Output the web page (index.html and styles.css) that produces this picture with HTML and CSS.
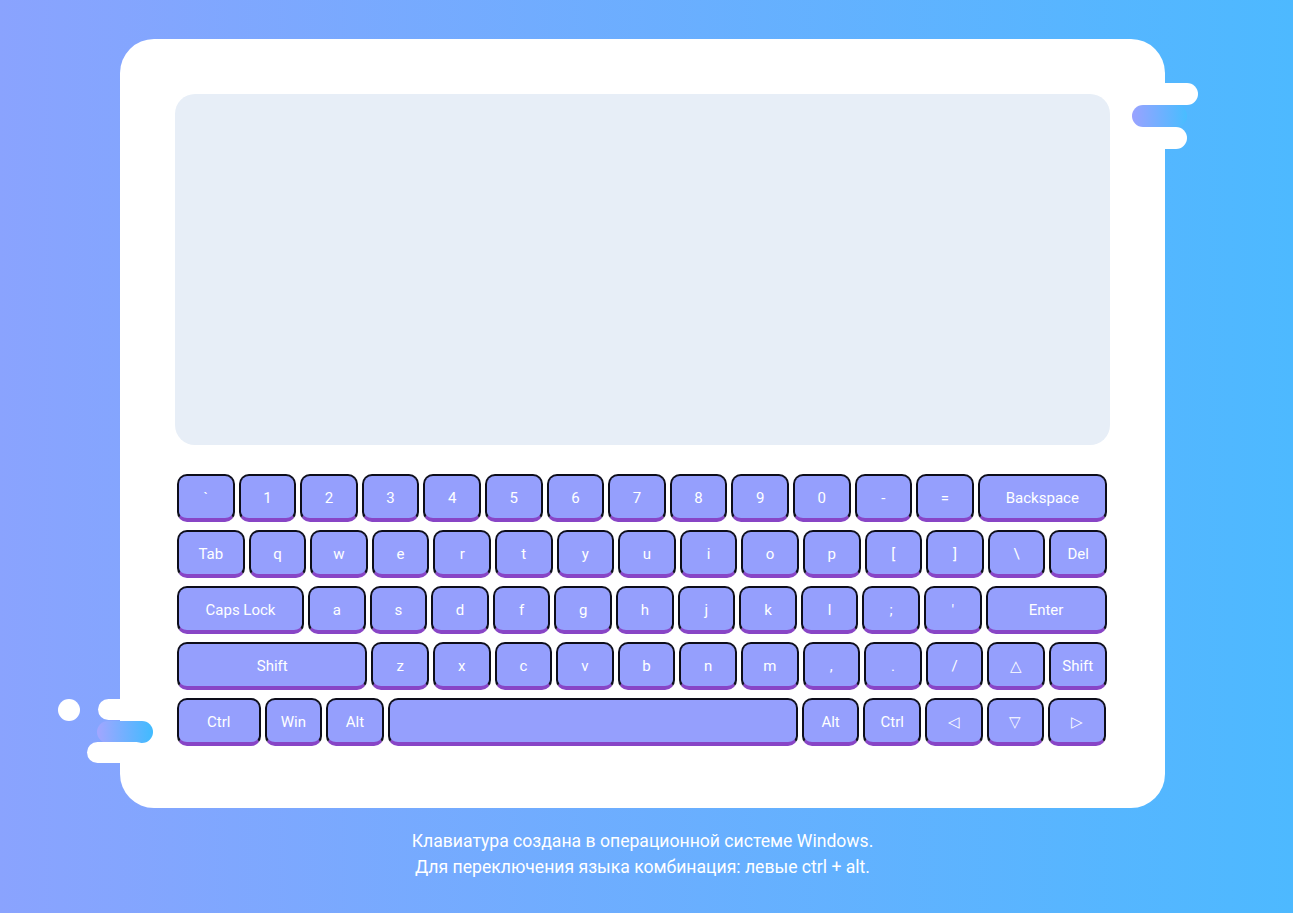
FILE: index.html
```html
<!DOCTYPE html>
<html lang="ru">
<head>
<meta charset="utf-8">
<title>Virtual Keyboard</title>
<link rel="stylesheet" href="styles.css">
</head>
<body>
<div class="page">
  <div class="card">
    <span class="deco deco-tr1"></span>
    <span class="deco deco-tr2"></span>
    <span class="deco deco-tr3"></span>
    <span class="deco deco-dot"></span>
    <span class="deco deco-bl1"></span>
    <span class="deco deco-bl2"></span>
    <span class="deco deco-bl3"></span>
    <textarea class="screen"></textarea>
    <div class="keyboard">
      <div class="row">
        <div class="key">`</div><div class="key">1</div><div class="key">2</div><div class="key">3</div><div class="key">4</div><div class="key">5</div><div class="key">6</div><div class="key">7</div><div class="key">8</div><div class="key">9</div><div class="key">0</div><div class="key">-</div><div class="key">=</div><div class="key k-back">Backspace</div>
      </div>
      <div class="row">
        <div class="key k-tab">Tab</div><div class="key">q</div><div class="key">w</div><div class="key">e</div><div class="key">r</div><div class="key">t</div><div class="key">y</div><div class="key">u</div><div class="key">i</div><div class="key">o</div><div class="key">p</div><div class="key">[</div><div class="key">]</div><div class="key">\</div><div class="key">Del</div>
      </div>
      <div class="row">
        <div class="key k-caps">Caps Lock</div><div class="key">a</div><div class="key">s</div><div class="key">d</div><div class="key">f</div><div class="key">g</div><div class="key">h</div><div class="key">j</div><div class="key">k</div><div class="key">l</div><div class="key">;</div><div class="key">'</div><div class="key k-enter">Enter</div>
      </div>
      <div class="row">
        <div class="key k-shift">Shift</div><div class="key">z</div><div class="key">x</div><div class="key">c</div><div class="key">v</div><div class="key">b</div><div class="key">n</div><div class="key">m</div><div class="key">,</div><div class="key">.</div><div class="key">/</div><div class="key">△</div><div class="key">Shift</div>
      </div>
      <div class="row">
        <div class="key k-ctrl">Ctrl</div><div class="key">Win</div><div class="key">Alt</div><div class="key k-space"></div><div class="key">Alt</div><div class="key">Ctrl</div><div class="key">◁</div><div class="key">▽</div><div class="key">▷</div>
      </div>
    </div>
  </div>
  <p class="note">Клавиатура создана в операционной системе Windows.<br>Для переключения языка комбинация: левые ctrl + alt.</p>
</div>
</body>
</html>
```
FILE: styles.css
```css
* { box-sizing: border-box; }
html, body { margin: 0; height: 100%; }
body {
  background: linear-gradient(90deg, #8aa3fe 0%, #4db9ff 100%);
  font-family: Roboto, "Noto Sans", sans-serif;
  overflow: hidden;
}
.page {
  padding: 39px 0 0 120px;
  width: 1165px;
}
.card {
  position: relative;
  width: 1045px;
  height: 769px;
  background: #fff;
  border-radius: 34px;
  padding: 55px 55px 0 55px;
}
.screen {
  display: block;
  width: 935px;
  height: 351px;
  background: #e7eef7;
  border: none;
  border-radius: 20px;
  resize: none;
  outline: none;
  margin: 0;
}
.keyboard {
  margin: 29px 0 0 2px;
  width: 930px;
  display: flex;
  flex-direction: column;
  gap: 8px;
}
.row {
  display: flex;
  gap: 4px;
}
.key {
  width: 57.6px;
  height: 48px;
  flex: none;
  background: #959ffd;
  border: 2px solid #0d0d1a;
  border-bottom: 4px solid #8845c6;
  border-radius: 10px;
  color: #fff;
  font-size: 15px;
  display: flex;
  align-items: center;
  justify-content: center;
  padding-top: 2px;
}
.k-back { width: 129.2px; }
.k-tab { width: 67.6px; }
.k-caps { width: 127px; }
.k-enter { width: 121px; }
.k-shift { width: 190.4px; }
.k-ctrl { width: 83.6px; }
.k-space { width: 410px; }

.note {
  margin: 20px 0 0 0;
  width: 1045px;
  text-align: center;
  color: #fff;
  font-size: 17.6px;
  line-height: 26px;
}

.deco {
  position: absolute;
  border-radius: 11px;
  height: 22px;
}
.deco-tr1 { top: 44px; left: 1000px; width: 78px; background: #fff; }
.deco-tr2 { top: 66px; left: 1012px; width: 55px; background: linear-gradient(90deg, #9aa2ff, #48bdff); }
.deco-tr3 { top: 88px; left: 1000px; width: 67px; background: #fff; }
.deco-dot { top: 660px; left: -62px; width: 22px; height: 22px; border-radius: 50%; background: #fff; }
.deco-bl1 { top: 660px; left: -22px; width: 60px; height: 21px; background: #fff; }
.deco-bl2 { top: 682px; left: -23px; width: 56px; background: linear-gradient(90deg, #a2a6ff, #40bbff); }
.deco-bl3 { top: 703px; left: -33px; width: 60px; height: 21px; background: #fff; }
```
